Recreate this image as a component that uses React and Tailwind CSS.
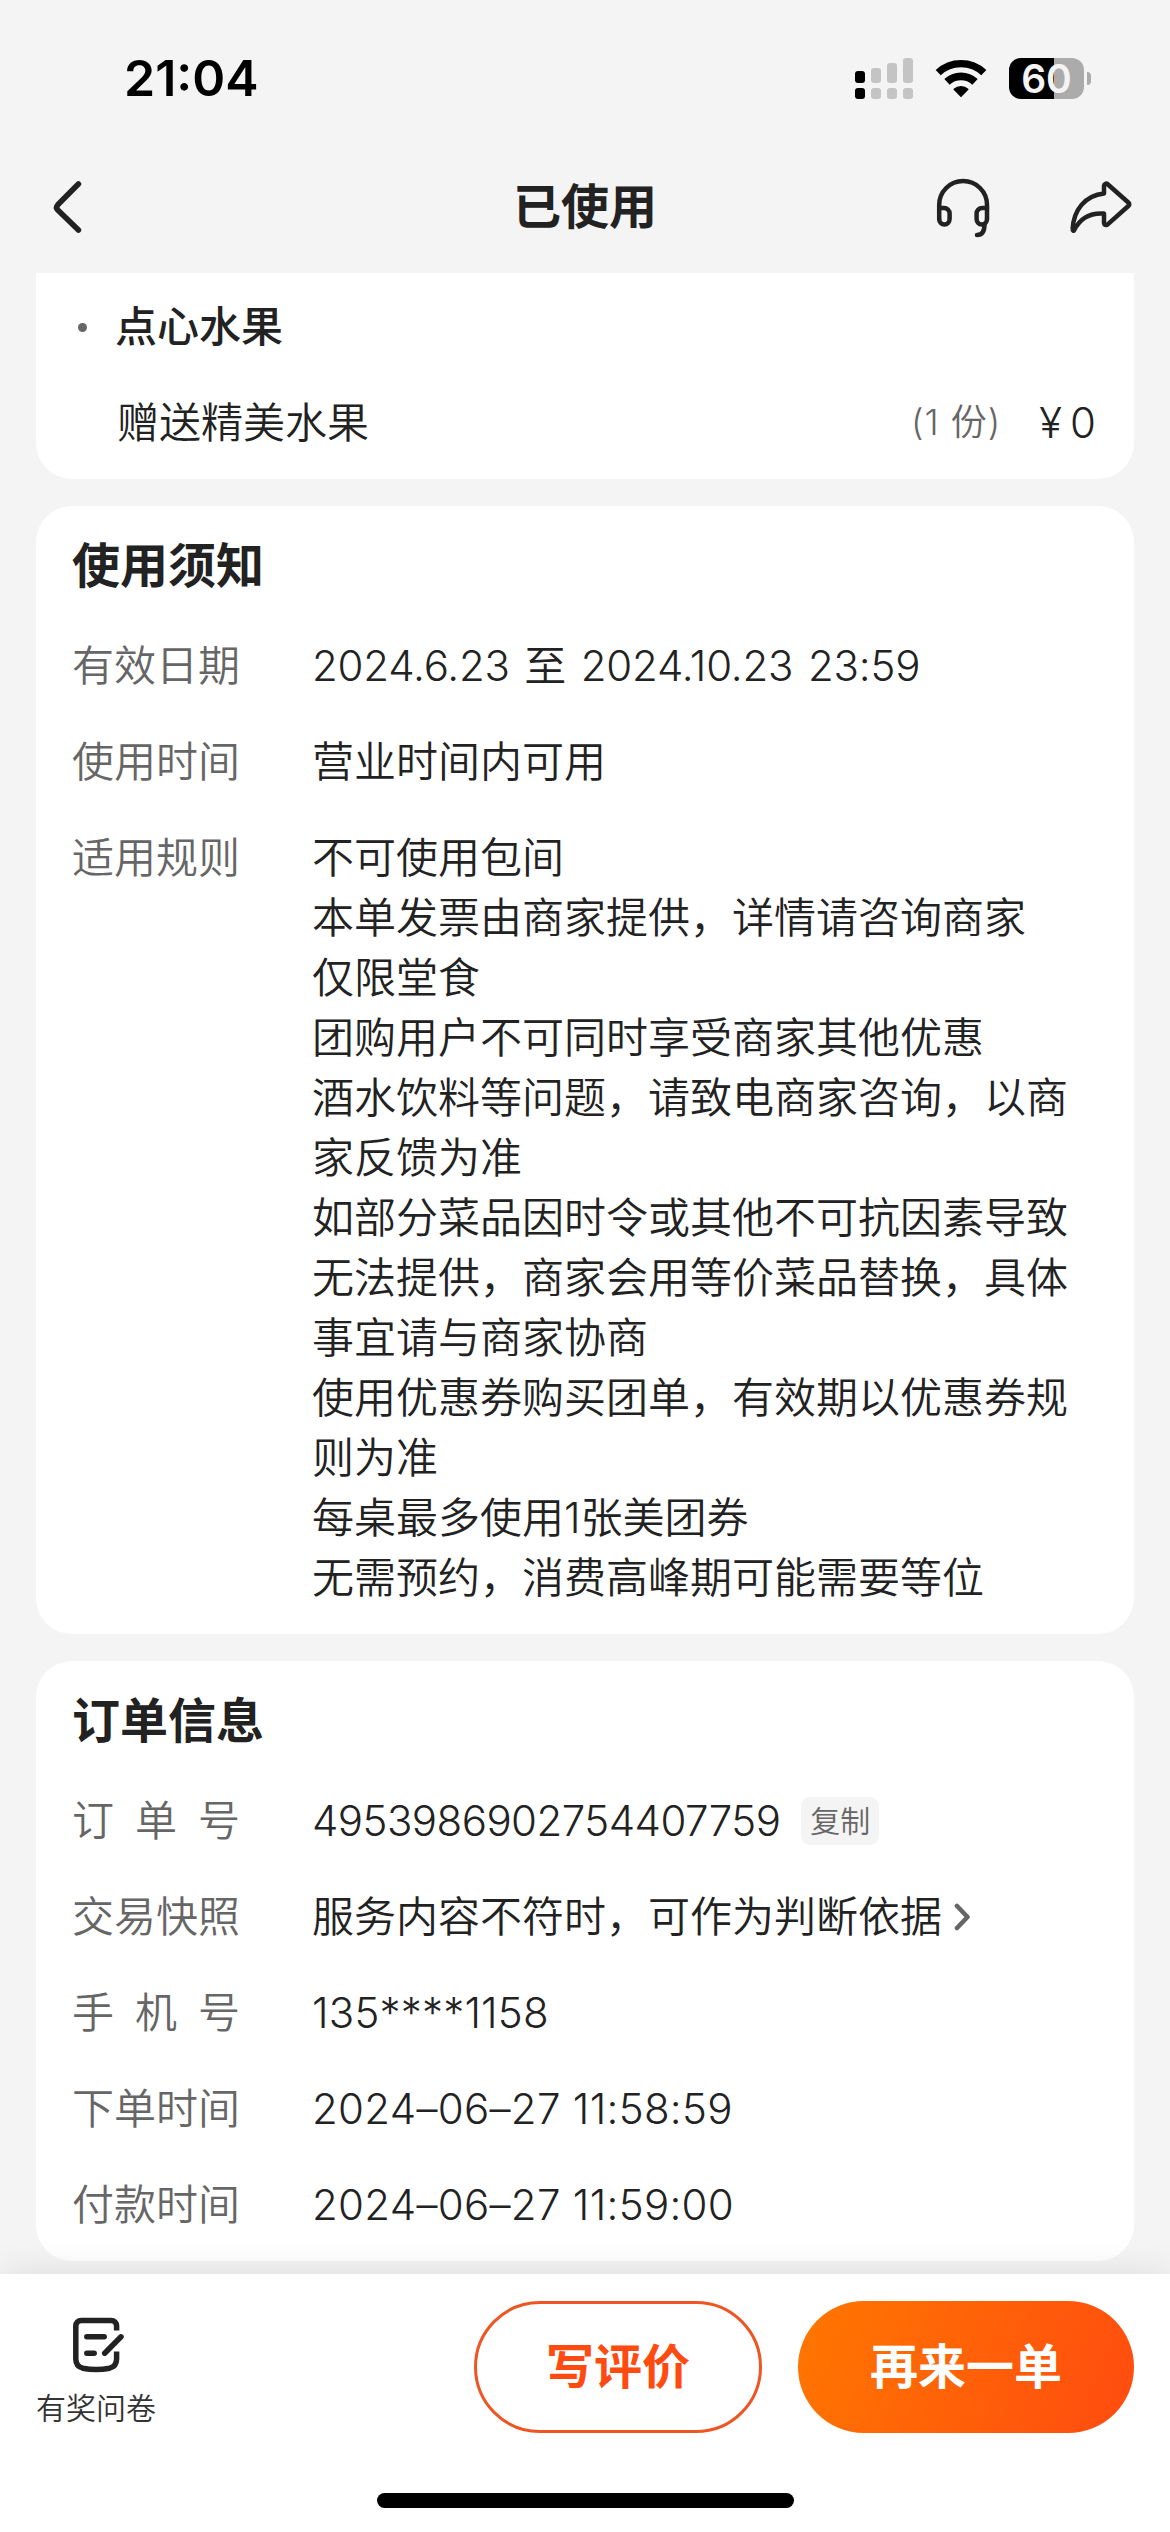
import React from 'react';

const rules = [
  '不可使用包间',
  '本单发票由商家提供，详情请咨询商家',
  '仅限堂食',
  '团购用户不可同时享受商家其他优惠',
  '酒水饮料等问题，请致电商家咨询，以商家反馈为准',
  '如部分菜品因时令或其他不可抗因素导致无法提供，商家会用等价菜品替换，具体事宜请与商家协商',
  '使用优惠券购买团单，有效期以优惠券规则为准',
  '每桌最多使用1张美团券',
  '无需预约，消费高峰期可能需要等位',
];

function SignalIcon() {
  return (
    <svg width="58" height="41" viewBox="0 0 58 41">
      <g fill="#000">
        <rect x="0" y="13" width="10" height="12" rx="3" />
        <rect x="0" y="30" width="10" height="11" rx="3" />
      </g>
      <g fill="#c4c4c4">
        <rect x="16" y="10" width="10" height="15" rx="3" />
        <rect x="32" y="5" width="10" height="20" rx="3" />
        <rect x="48" y="0" width="10" height="25" rx="3" />
        <rect x="16" y="30" width="10" height="11" rx="3" />
        <rect x="32" y="30" width="10" height="11" rx="3" />
        <rect x="48" y="30" width="10" height="11" rx="3" />
      </g>
    </svg>
  );
}

function WifiIcon() {
  return (
    <svg width="54" height="41" viewBox="0 0 54 41" fill="none" stroke="#000">
      <path d="M4.2 14.6a33.4 33.4 0 0 1 45.6 0" strokeWidth="7.4" />
      <path d="M13 23.9a20.6 20.6 0 0 1 28 0" strokeWidth="7.8" />
      <path d="M20.2 31.2a10.5 10.5 0 0 1 13.6 0L27 38.2Z" fill="#000" strokeWidth="1.5" strokeLinejoin="round" />
    </svg>
  );
}

function Battery() {
  return (
    <div className="flex items-center gap-[3px]">
      <div className="flex h-[41px] w-[75px] items-center justify-center rounded-[12px] bg-[linear-gradient(90deg,#000_60%,#ababab_60%)] text-[39px] leading-none font-semibold text-[#f4f4f4]">
        60
      </div>
      <div className="h-[13px] w-[4px] rounded-r-full bg-[#ababab]"></div>
    </div>
  );
}

function BackIcon() {
  return (
    <svg width="34" height="58" viewBox="0 0 34 58" fill="none" stroke="#222" strokeWidth="5.6" strokeLinecap="round" strokeLinejoin="round">
      <path d="M28.4 6 7.8 26.8q-2.4 2.6 0 5.2L28.4 52" />
    </svg>
  );
}

function HeadsetIcon() {
  return (
    <svg width="60" height="66" viewBox="0 0 60 66" fill="none" stroke="#222" strokeWidth="4.5" strokeLinecap="round" strokeLinejoin="round">
      <path d="M6.2 45V31a23.9 24 0 0 1 47.8 0v14" />
      <path d="M6.2 34H11a5.6 5.6 0 0 1 5.6 5.6V45a5.2 5.4 0 0 1-10.4 0" />
      <path d="M54 34h-4.8a5.6 5.6 0 0 0-5.6 5.6V45a5.2 5.4 0 0 0 10.4 0" />
      <path d="M51.5 50.5C51.5 57 49 61 44 61" />
    </svg>
  );
}

function ShareIcon() {
  return (
    <svg width="70" height="60" viewBox="0 0 70 60" fill="none" stroke="#222" strokeWidth="4.5" strokeLinecap="round" strokeLinejoin="round">
      <path d="M38 16.5V8.6a2.2 2.2 0 0 1 3.7-1.4L62.6 25.8a2 2 0 0 1 0 3L41.7 47.4A2.2 2.2 0 0 1 38 46V36.5C24 35.5 14 41.5 8.2 53 7.5 54.2 6.5 53.5 6.6 52.2 7.6 33 19 18.5 38 16.5Z" />
    </svg>
  );
}

function SurveyIcon() {
  return (
    <svg className="ml-1" width="56" height="62" viewBox="0 0 56 62" fill="none" stroke="#222" strokeWidth="5.5">
      <path d="M46.6 16.5V12a5.5 5.5 0 0 0-5.5-5.6H11.3A5.5 5.5 0 0 0 5.8 12v33c0 5 2.5 8 7 9.2q13.4 2.8 26.8 0c4.5-1.2 7-4.2 7-9.2V37.5" />
      <path d="M16.8 22.8h17.4M16.8 39.2h7.4M34.7 39.2 51 22.8" strokeLinecap="round" />
    </svg>
  );
}

function Row({ label, spread, children }) {
  return (
    <div className="flex">
      <div className="w-[240px] shrink-0 text-[#666]">
        {spread ? (
          <div className="flex w-[168px] justify-between">
            {label.split('').map(c => <span key={c}>{c}</span>)}
          </div>
        ) : label}
      </div>
      <div className="flex-1">{children}</div>
    </div>
  );
}

function Card({ title, children }) {
  return (
    <section className="rounded-[36px] bg-white px-9 pt-6 pb-[26px]">
      <h2 className="mb-[34px] text-[48px] leading-[72px] font-semibold">{title}</h2>
      <div className="flex flex-col gap-9 text-[42px] leading-[60px]">{children}</div>
    </section>
  );
}

export default function App() {
  return (
    <div className="flex h-[2532px] w-[1170px] flex-col overflow-hidden bg-[#f4f4f4] font-['Inter','Noto_Sans_CJK_SC',sans-serif] font-[350] text-[#222]" lang="zh-CN">
      <header className="h-[273px] shrink-0">
        <div className="flex h-[156px] items-center justify-between pr-[79px] pl-[124px] text-black">
          <span className="text-[50px] leading-none font-semibold">21:04</span>
          <div className="flex items-center gap-[21px]">
            <SignalIcon />
            <WifiIcon />
            <Battery />
          </div>
        </div>
        <div className="grid h-[102px] grid-cols-3 items-center pr-[34px] pl-[50px]">
          <BackIcon />
          <h1 className="pr-4 text-center text-[48px] leading-none font-semibold">已使用</h1>
          <div className="flex items-center justify-end gap-[73px]">
            <HeadsetIcon />
            <ShareIcon />
          </div>
        </div>
      </header>

      <main className="flex min-h-0 flex-1 flex-col gap-[27px] overflow-hidden px-9">
        <section className="rounded-b-[36px] bg-white px-9 pt-6 pb-[26px] text-[42px] leading-[60px]">
          <div className="flex items-center">
            <span className="mr-[28px] ml-[6px] size-[9px] rounded-full bg-[#666]"></span>
            <span className="font-medium">点心水果</span>
          </div>
          <div className="mt-9 flex h-[60px] items-center justify-between pl-[45px]">
            <span>赠送精美水果</span>
            <div className="flex items-center">
              <span className="pb-[3px] text-[36px] tracking-[1px] text-[#666]">(1 份)</span>
              <span className="ml-[38px]">¥</span>
              <span className="mr-[2px] ml-[8px]">0</span>
            </div>
          </div>
        </section>

        <Card title="使用须知">
          <Row label="有效日期">
            <span className="tracking-[-0.2px] [word-spacing:3px]">2024.6.23 至 2024.10.23 23:59</span>
          </Row>
          <Row label="使用时间">营业时间内可用</Row>
          <Row label="适用规则">
            {rules.map(rule => <p key={rule} className="w-[757px]">{rule}</p>)}
          </Row>
        </Card>

        <Card title="订单信息">
          <Row label="订单号" spread>
            <div className="flex items-center">
              <span className="tracking-[-0.55px]">4953986902754407759</span>
              <button className="ml-[21px] h-12 w-[78px] rounded-[9px] bg-[#f4f4f4] text-[30px] leading-none text-[#666]">复制</button>
            </div>
          </Row>
          <Row label="交易快照">
            <div className="flex items-center">
              <span>服务内容不符时，可作为判断依据</span>
              <svg className="ml-3" width="18" height="30" viewBox="0 0 18 30" fill="none" stroke="#666" strokeWidth="4.6" strokeLinecap="round" strokeLinejoin="round">
                <path d="m3 4 10.5 11L3 26" />
              </svg>
            </div>
          </Row>
          <Row label="手机号" spread>
            <span className="tracking-[0.2px]">135****1158</span>
          </Row>
          <Row label="下单时间">
            <span className="tracking-[0.3px]">2024–06–27 11:58:59</span>
          </Row>
          <Row label="付款时间">
            <span className="tracking-[0.3px]">2024–06–27 11:59:00</span>
          </Row>
        </Card>
      </main>

      <footer className="relative h-[258px] shrink-0 bg-white px-9 pt-[27px] shadow-[0_0_36px_rgba(0,0,0,0.1)]">
        <div className="flex h-[132px] items-center">
          <div className="flex w-[120px] flex-col items-center pt-[10px]">
            <SurveyIcon />
            <span className="mt-[10px] text-[30px] leading-[44px] text-[#333]">有奖问卷</span>
          </div>
          <button className="ml-auto h-[132px] w-[288px] rounded-full border-3 border-[#ee5522] text-[48px] leading-none font-semibold text-[#ff4b10]">
            写评价
          </button>
          <button className="ml-9 h-[132px] w-[336px] rounded-full bg-linear-[112deg,#ff7700,#ff4b10] text-[48px] leading-none font-semibold text-white">
            再来一单
          </button>
        </div>
        <div className="mx-auto mt-[60px] h-[15px] w-[417px] rounded-full bg-black"></div>
      </footer>
    </div>
  );
}
